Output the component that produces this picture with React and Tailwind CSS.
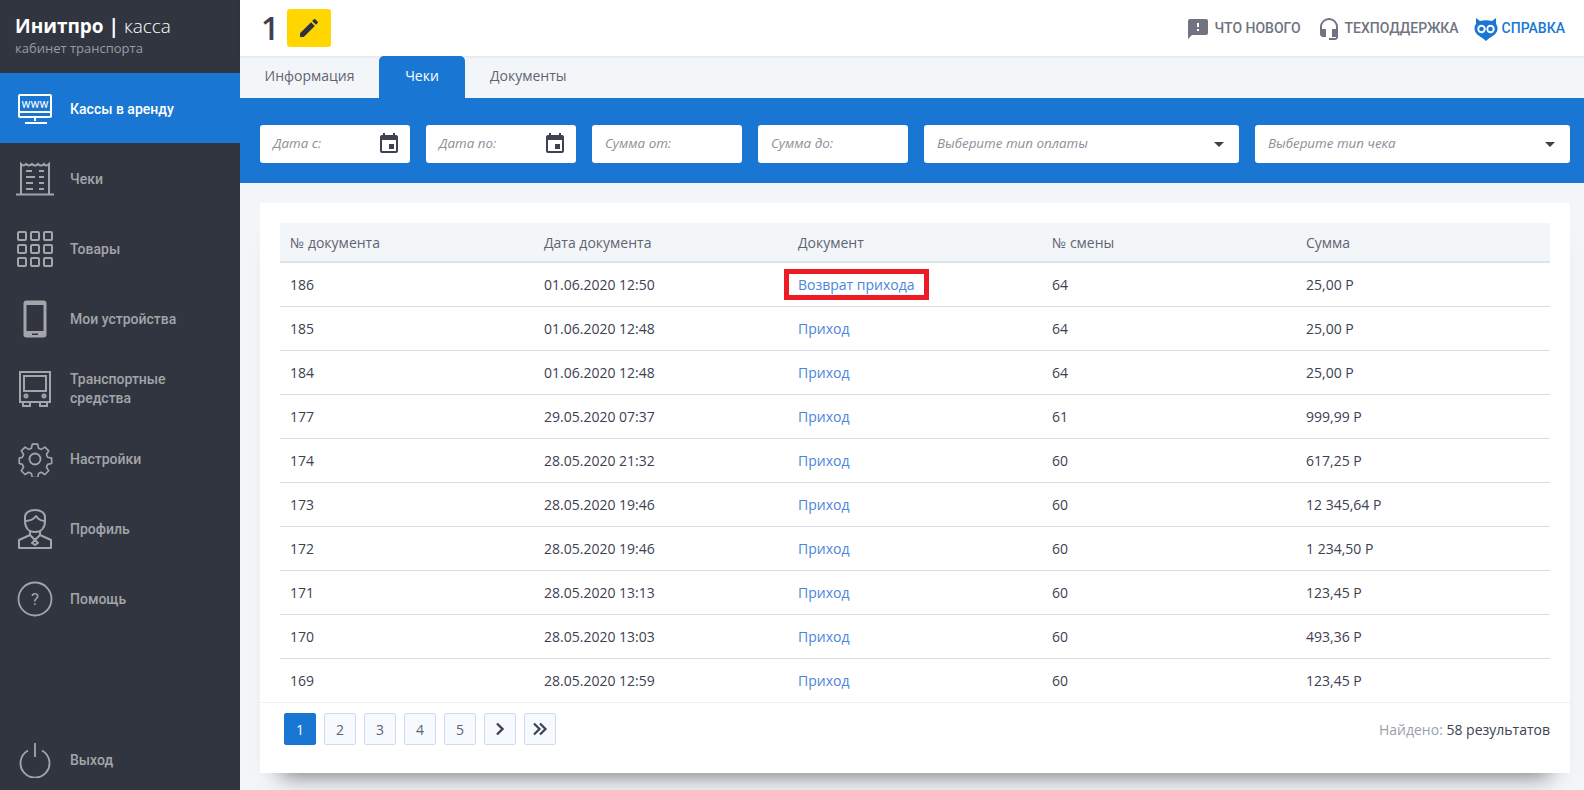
import React from "react";
import { MdEdit, MdSmsFailed, MdArrowDropDown, MdEvent, MdHeadsetMic } from "react-icons/md";

const rows = [
  ["186", "01.06.2020 12:50", "Возврат прихода", "64", "25,00 Р"],
  ["185", "01.06.2020 12:48", "Приход", "64", "25,00 Р"],
  ["184", "01.06.2020 12:48", "Приход", "64", "25,00 Р"],
  ["177", "29.05.2020 07:37", "Приход", "61", "999,99 Р"],
  ["174", "28.05.2020 21:32", "Приход", "60", "617,25 Р"],
  ["173", "28.05.2020 19:46", "Приход", "60", "12 345,64 Р"],
  ["172", "28.05.2020 19:46", "Приход", "60", "1 234,50 Р"],
  ["171", "28.05.2020 13:13", "Приход", "60", "123,45 Р"],
  ["170", "28.05.2020 13:03", "Приход", "60", "493,36 Р"],
  ["169", "28.05.2020 12:59", "Приход", "60", "123,45 Р"],
];

const IconWww = () => (
  <svg width="36" height="32" viewBox="0 0 36 32" fill="none" stroke="currentColor" strokeWidth="2">
    <rect x="2" y="2" width="32" height="22" rx="1" />
    <path d="M2 19h32M18 24v4M8 30h22" />
    <text x="18" y="14.500" fontSize="12" textAnchor="middle" fill="currentColor" stroke="none" fontFamily="Roboto, sans-serif">www</text>
  </svg>
);

const IconCheck = () => (
  <svg width="40" height="36" viewBox="0 0 40 36" fill="none" stroke="currentColor" strokeWidth="2">
    <path d="M6 33V3c2 2 3 2 5 0 2 2 4 2 6 0 2 2 4 2 6 0 2 2 4 2 6 0 1 2 3 2 5 0v30" />
    <path d="M1 33.500h38M11 10h6M24 10h5M11 16h9M24 16h5M11 22h7M24 22h5M11 28h7M24 28h5" />
  </svg>
);

const IconGrid = () => (
  <svg width="36" height="36" viewBox="0 0 36 36" fill="none" stroke="currentColor" strokeWidth="2">
    {[1, 14, 27].map((y) =>
      [1, 14, 27].map((x) => <rect key={`${x}-${y}`} x={x} y={y} width="8" height="8" rx="1" />)
    )}
  </svg>
);

const IconPhone = () => (
  <svg width="24" height="38" viewBox="0 0 24 38" fill="none">
    <rect x="0.500" y="0.500" width="23" height="37" rx="3" fill="currentColor" />
    <rect x="3.500" y="5" width="17" height="26" fill="#31353f" />
    <rect x="9" y="33.500" width="6" height="1.500" fill="#31353f" />
  </svg>
);

const IconBus = () => (
  <svg width="32" height="36" viewBox="0 0 32 36" fill="none" stroke="currentColor" strokeWidth="2">
    <rect x="1" y="1" width="30" height="30" />
    <rect x="5" y="5" width="22" height="15" />
    <circle cx="7" cy="25" r="1.500" />
    <circle cx="25" cy="25" r="1.500" />
    <path d="M4 31v4h7v-4M21 31v4h7v-4" />
  </svg>
);

const IconGear = () => (
  <svg width="36" height="36" viewBox="0 0 36 36" fill="none" stroke="currentColor" strokeWidth="1.800" strokeLinejoin="round">
    <circle cx="18" cy="18" r="5.500" />
    <path d="M15 1.500h6l1 4.500 3 1.300 4-2.500 4.200 4.200-2.500 4 1.300 3 4.500 1v6l-4.500 1-1.300 3 2.500 4-4.200 4.200-4-2.500-3 1.300-1 4.500h-6l-1-4.500-3-1.300-4 2.500-4.200-4.200 2.500-4-1.300-3-3.500-1v-6l3.500-1 1.300-3-2.500-4L7 4.800l4 2.500 3-1.300z" transform="translate(1.800 1.800) scale(.9)" />
  </svg>
);

const IconUser = () => (
  <svg width="36" height="40" viewBox="0 0 36 40" fill="none" stroke="currentColor" strokeWidth="2" strokeLinejoin="round">
    <path d="M8 12V8c0-4 4-7 10-7s10 3 10 7v4c0 7-4 11-10 11S8 19 8 12z" />
    <path d="M8 12c6 0 9-2 11-5 2 3 5 5 9 5" />
    <path d="M13 22v4l-11 5v8h32v-8l-11-5v-4" />
    <path d="M13 26l5 5 5-5M18 31l-3 3 3 2 3-2z" />
  </svg>
);

const IconHelp = () => (
  <svg width="36" height="36" viewBox="0 0 36 36" fill="none" stroke="currentColor" strokeWidth="1.800">
    <circle cx="18" cy="18" r="16.500" />
    <text x="18" y="24" fontSize="17" textAnchor="middle" fill="currentColor" stroke="none" fontFamily="Roboto, sans-serif">?</text>
  </svg>
);

const IconPower = () => (
  <svg width="32" height="36" viewBox="0 0 32 36" fill="none" stroke="currentColor" strokeWidth="1.800">
    <path d="M16 1v14M9 8.500a14.500 14.500 0 1 0 14 0" />
  </svg>
);

const IconOwl = () => (
  <svg width="24" height="24" viewBox="0 0 24 24">
    <path d="M2 1l4 3c4-1 8-1 12 0l4-3v6c2 2 2 7 0 9-2 3-6 4-10 8C8 20 4 19 2 16c-2-2-2-7 0-9z" fill="#1976d2" />
    <circle cx="7.500" cy="12" r="4.200" fill="#fff" />
    <circle cx="16.500" cy="12" r="4.200" fill="#fff" />
    <circle cx="7.500" cy="12" r="2.300" fill="#1976d2" />
    <circle cx="16.500" cy="12" r="2.300" fill="#1976d2" />
  </svg>
);

const IconNext = () => (
  <svg width="12" height="14" viewBox="0 0 12 14" fill="none" stroke="#3d4151" strokeWidth="2.400">
    <path d="M3 1.500L8.500 7 3 12.500" />
  </svg>
);

const IconLast = () => (
  <svg width="16" height="14" viewBox="0 0 16 14" fill="none" stroke="#3d4151" strokeWidth="2.200">
    <path d="M2 1.500L7.500 7 2 12.500M8 1.500L13.500 7 8 12.500" />
  </svg>
);

const menu = [
  { title: "Кассы в аренду", icon: <IconWww />, active: true },
  { title: "Чеки", icon: <IconCheck /> },
  { title: "Товары", icon: <IconGrid /> },
  { title: "Мои устройства", icon: <IconPhone /> },
  { title: <>Транспортные<br />средства</>, icon: <IconBus /> },
  { title: "Настройки", icon: <IconGear /> },
  { title: "Профиль", icon: <IconUser /> },
  { title: "Помощь", icon: <IconHelp /> },
];

const MenuItem = ({ title, icon, active }) => (
  <div className={`flex h-[70px] items-center ${active ? "bg-[#1976d2] text-white" : "text-[#a3a5aa]"}`}>
    <div className="flex w-[70px] shrink-0 justify-center pt-[1px]">{icon}</div>
    <div className="pt-[2px] text-[14px] font-medium leading-[19px] font-['Roboto',sans-serif]">{title}</div>
  </div>
);

const DateField = ({ label }) => (
  <div className="flex h-[38px] w-[150px] items-center justify-between rounded-[3px] bg-white pl-[13px] pr-[9px] text-[13.4px] italic text-[#8b8f98]">
    {label}
    <MdEvent className="text-[#3d4151]" size={24} />
  </div>
);

const AmountField = ({ label }) => (
  <div className="flex h-[38px] w-[150px] items-center rounded-[3px] bg-white pl-[13px] text-[13.4px] italic text-[#8b8f98]">
    {label}
  </div>
);

const SelectField = ({ label }) => (
  <div className="flex h-[38px] flex-1 items-center justify-between rounded-[3px] bg-white pl-[13px] pr-[8px] text-[13.4px] italic text-[#8b8f98]">
    {label}
    <MdArrowDropDown className="text-[#3d4151]" size={24} />
  </div>
);

const PageBtn = ({ children, active }) => (
  <div
    className={`flex h-8 w-8 items-center justify-center rounded-[2px] border text-[14px] ${
      active ? "border-[#1976d2] bg-[#1976d2] text-white" : "border-[#d0dcee] bg-[#f6f9fd] text-[#5f6472]"
    }`}
  >
    {children}
  </div>
);

export default function App() {
  return (
    <div className="flex h-[790px] w-[1584px] overflow-hidden bg-[#f3f6f9] font-['Open_Sans',sans-serif] text-[#3d4151]">
      <aside className="flex w-[240px] shrink-0 flex-col bg-[#31353f]">
        <div className="h-[73px] pl-[15px] pt-[14px]">
          <div className="text-[19px] leading-[25px] text-white">
            <span className="font-bold">Инитпро | </span>
            <span className="font-light">касса</span>
          </div>
          <div className="text-[13px] leading-[18px] text-[#9a9ca2]">кабинет транспорта</div>
        </div>
        {menu.map((m, i) => (
          <MenuItem key={i} {...m} />
        ))}
        <div className="mt-auto mb-[-4px]">
          <MenuItem title="Выход" icon={<IconPower />} />
        </div>
      </aside>

      <main className="flex min-w-0 flex-1 flex-col">
        <header className="flex h-[56px] items-center justify-between bg-white pl-[21px] pr-[19px] shadow-[0_1px_3px_rgba(0,0,0,0.08)]">
          <div className="flex items-center gap-[8px]">
            <span className="text-[32px] font-semibold leading-none">1</span>
            <button className="flex h-[38px] w-[44px] items-center justify-center rounded-[3px] bg-[#ffd600] text-[#2f3340]">
              <MdEdit size={24} />
            </button>
          </div>
          <div className="flex items-center pt-[1px] font-['Roboto',sans-serif] text-[14px] font-medium">
            <div className="flex items-center gap-[5px] text-[#6f7480]">
              <MdSmsFailed size={24} />
              ЧТО НОВОГО
            </div>
            <div className="ml-[16px] flex items-center gap-[4px] text-[#6f7480]">
              <MdHeadsetMic size={24} />
              ТЕХПОДДЕРЖКА
            </div>
            <div className="ml-[15px] flex items-center gap-[4px] text-[#1976d2]">
              <IconOwl />
              СПРАВКА
            </div>
          </div>
        </header>

        <nav className="flex h-[42px] text-[14px] text-[#5f6472]">
          <div className="flex w-[139px] items-center justify-center pb-[3px]">Информация</div>
          <div className="flex w-[86px] items-center justify-center rounded-t-[5px] bg-[#1976d2] pb-[3px] text-white">Чеки</div>
          <div className="flex items-center pb-[3px] pl-[25px]">Документы</div>
        </nav>

        <div className="flex h-[85px] items-center gap-4 bg-[#1976d2] pl-[20px] pr-[14px] pt-[6px]">
          <DateField label="Дата с:" />
          <DateField label="Дата по:" />
          <AmountField label="Сумма от:" />
          <AmountField label="Сумма до:" />
          <SelectField label="Выберите тип оплаты" />
          <SelectField label="Выберите тип чека" />
        </div>

        <section className="ml-[20px] mr-[14px] mt-[20px] h-[570px] bg-white shadow-[0_22px_22px_-20px_rgba(0,0,0,0.55)]">
          <div className="px-[20px] pt-[20px]">
            <div className="grid h-[40px] grid-cols-5 items-center border-b-2 border-[#dfe3e8] bg-[#f3f6f9] text-[14px]">
              {["№ документа", "Дата документа", "Документ", "№ смены", "Сумма"].map((h) => (
                <div key={h} className="pl-[10px] text-[#5f6472]">{h}</div>
              ))}
            </div>
            {rows.map((r, i) => (
              <div
                key={r[0]}
                className={`grid grid-cols-5 items-center text-[14px] ${i < rows.length - 1 ? "h-[44px] border-b border-[#d5deea]" : "h-[43px]"}`}
              >
                <div className="pl-[10px]">{r[0]}</div>
                <div className="pl-[10px]">{r[1]}</div>
                <div className="pl-[10px]">
                  <span className={i === 0 ? "relative text-[#4a86dc] after:absolute after:-inset-x-[14px] after:-inset-y-[6px] after:border-[5px] after:border-[#ed1c24] after:content-['']" : "text-[#4a86dc]"}>
                    {r[2]}
                  </span>
                </div>
                <div className="pl-[10px]">{r[3]}</div>
                <div className="pl-[10px]">{r[4]}</div>
              </div>
            ))}
          </div>
          <div className="flex h-[72px] items-start justify-between border-t border-[#eef0f3] pl-[24px] pr-[20px] pt-[10px]">
            <div className="flex gap-2">
              <PageBtn active>1</PageBtn>
              <PageBtn>2</PageBtn>
              <PageBtn>3</PageBtn>
              <PageBtn>4</PageBtn>
              <PageBtn>5</PageBtn>
              <PageBtn><IconNext /></PageBtn>
              <PageBtn><IconLast /></PageBtn>
            </div>
            <div className="pt-[7px] text-[14px] leading-[20px]">
              <span className="text-[#9a9fa9]">Найдено: </span>58 результатов
            </div>
          </div>
        </section>
      </main>
    </div>
  );
}
